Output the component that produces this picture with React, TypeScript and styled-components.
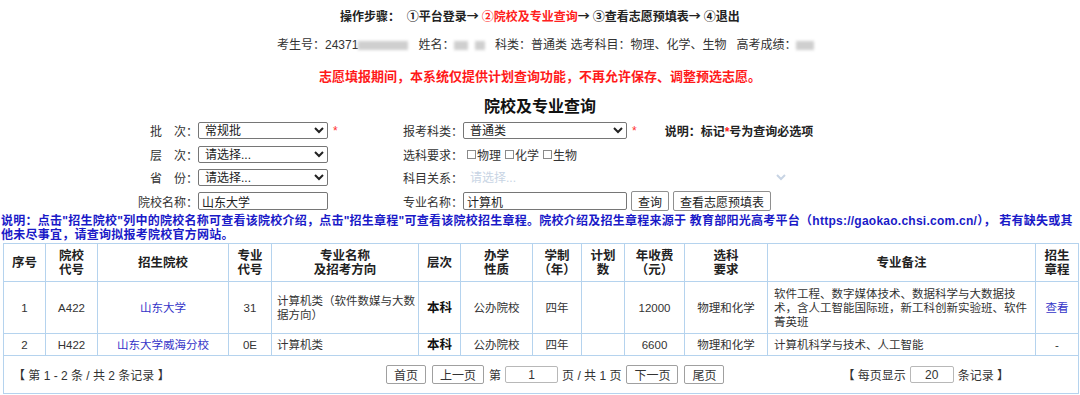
import React from 'react';
import styled, { createGlobalStyle } from 'styled-components';

const GlobalStyle = createGlobalStyle`
  html, body {
    margin: 0;
    padding: 0;
    background: #fff;
  }
  body {
    font-family: "Liberation Sans", "Noto Sans CJK SC", sans-serif;
    font-size: 12px;
    color: #333;
  }
`;

const Page = styled.div`
  width: 1080px;
  height: 395px;
  overflow: hidden;
  padding-top: 9px;
  box-sizing: border-box;
`;

const Steps = styled.div`
  text-align: center;
  font-weight: bold;
  font-size: 12px;
  line-height: 14px;
  color: #222;
`;

const Arrow = styled.span`
  font-family: "Noto Sans CJK SC", sans-serif;
  margin-right: 3px;
`;

const Red = styled.span`
  color: #ff2020;
`;

const InfoLine = styled.div`
  margin-top: 14px;
  padding-left: 277px;
  line-height: 14px;
  font-size: 12px;
  color: #333;
  white-space: nowrap;
`;

const Redact = styled.span<{ $w: number }>`
  display: inline-block;
  width: ${({ $w }) => $w}px;
  height: 9px;
  vertical-align: -1px;
  background: #cfcfcf;
  filter: blur(1.5px);
`;

const Notice = styled.div`
  margin-top: 18px;
  text-align: center;
  font-weight: bold;
  font-size: 13px;
  line-height: 14px;
  color: #ff1a1a;
`;

const Title = styled.h2`
  margin: 13px 0 0;
  text-align: center;
  font-size: 16px;
  line-height: 20px;
  font-weight: bold;
  color: #111;
`;

const Form = styled.div`
  margin-top: 2px;
  display: grid;
  grid-template-columns: 198px 205px 60px 1fr;
  grid-auto-rows: 23.5px;
  align-items: center;
`;

const Label = styled.div`
  text-align: right;
  white-space: nowrap;
  color: #333;
`;

const Field = styled.div`
  display: flex;
  align-items: center;
  white-space: nowrap;
`;

const Select = styled.select<{ $w: number }>`
  width: ${({ $w }) => $w}px;
  height: 17px;
  font-family: inherit;
  font-size: 12px;
  color: #222;
  padding: 0 2px;
  border: 1px solid #767676;
  border-radius: 2px;
  background: #fff;
  &:disabled {
    border-color: transparent;
    color: #c8d4e4;
    opacity: 1;
  }
`;

const Input = styled.input<{ $w: number }>`
  width: ${({ $w }) => $w}px;
  height: 18px;
  box-sizing: border-box;
  font-family: inherit;
  font-size: 12px;
  color: #222;
  padding: 0 3px;
  border: 1px solid #767676;
  border-radius: 2px;
`;

const Star = styled.span`
  color: #ff3030;
  margin-left: 5px;
`;

const Hint = styled.span`
  margin-left: 28px;
  font-weight: bold;
  color: #222;
`;

const Check = styled.input`
  appearance: none;
  width: 9px;
  height: 9px;
  margin: 0 1px 0 4px;
  border: 1px solid #8a8a8a;
  background: #fff;
`;

const Button = styled.button`
  height: 20px;
  margin-left: 4px;
  padding: 0 6px;
  font-family: inherit;
  font-size: 12px;
  color: #222;
  background: #fff;
  border: 1px solid #8f8f8f;
  border-radius: 2px;
`;

const Desc = styled.div`
  margin-top: 1px;
  padding-left: 1px;
  font-size: 12px;
  font-weight: bold;
  line-height: 14px;
  letter-spacing: 0.25px;
  color: #1a1ac8;
`;

const Table = styled.table`
  margin: 1px 0 0 3px;
  width: 1075px;
  table-layout: fixed;
  border-collapse: collapse;
  font-size: 11.5px;
  color: #333;
`;

const Th = styled.th`
  height: 37px;
  padding: 0;
  border: 1px solid #b5d3ee;
  font-weight: bold;
  font-size: 12.5px;
  line-height: 14px;
  color: #222;
  text-align: center;
`;

const Td = styled.td<{ $align?: string; $pad?: string; $bold?: boolean }>`
  padding: ${({ $pad }) => $pad || '0'};
  border: 1px solid #b5d3ee;
  line-height: 14px;
  text-align: ${({ $align }) => $align || 'center'};
  font-weight: ${({ $bold }) => ($bold ? 'bold' : 'normal')};
  font-size: ${({ $bold }) => ($bold ? '12.5px' : '11.5px')};
  color: ${({ $bold }) => ($bold ? '#111' : '#333')};
  word-break: break-all;
`;

const Row = styled.tr<{ $h: number }>`
  height: ${({ $h }) => $h}px;
`;

const SchoolLink = styled.a`
  color: #3434c8;
  text-decoration: none;
  cursor: pointer;
`;

const PagerCell = styled.td`
  height: 37px;
  padding: 0 0 0 9px;
  border: 1px solid #b5d3ee;
`;

const Pager = styled.div`
  display: flex;
  align-items: center;
  font-size: 12px;
  color: #333;
  white-space: nowrap;
`;

const PagerLeft = styled.div`
  width: 372px;
`;

const PagerMid = styled.div`
  display: flex;
  align-items: center;
  gap: 4px;
`;

const PageBtn = styled.button`
  height: 19px;
  padding: 0 7px;
  font-family: inherit;
  font-size: 12px;
  color: #333;
  background: #fff;
  border: 1px solid #a0a0a0;
  border-radius: 2px;
  margin: 0 1px;
`;

const PagerRight = styled.div`
  margin-left: 117px;
  display: flex;
  align-items: center;
  gap: 4px;
`;

const SmallInput = styled.input<{ $w: number }>`
  width: ${({ $w }) => $w}px;
  height: 17px;
  box-sizing: border-box;
  font-family: inherit;
  font-size: 12px;
  color: #333;
  text-align: center;
  border: 1px solid #b8b8b8;
  border-radius: 2px;
  padding: 0;
`;

const cols = [42, 52, 131, 43, 147, 42, 72, 49, 43, 60, 83, 268, 43];

const headers = [
  ['序号'],
  ['院校', '代号'],
  ['招生院校'],
  ['专业', '代号'],
  ['专业名称', '及招考方向'],
  ['层次'],
  ['办学', '性质'],
  ['学制', '（年）'],
  ['计划', '数'],
  ['年收费', '（元）'],
  ['选科', '要求'],
  ['专业备注'],
  ['招生', '章程'],
];

const rows = [
  {
    no: 1,
    code: 'A422',
    school: '山东大学',
    major: '31',
    name: '计算机类（软件数媒与大数据方向）',
    level: '本科',
    kind: '公办院校',
    years: '四年',
    plan: '',
    fee: '12000',
    req: '物理和化学',
    note: '软件工程、数字媒体技术、数据科学与大数据技术，含人工智能国际班，新工科创新实验班、软件菁英班',
    rule: '查看',
    h: 52,
  },
  {
    no: 2,
    code: 'H422',
    school: '山东大学威海分校',
    major: '0E',
    name: '计算机类',
    level: '本科',
    kind: '公办院校',
    years: '四年',
    plan: '',
    fee: '6600',
    req: '物理和化学',
    note: '计算机科学与技术、人工智能',
    rule: '',
    h: 22,
  },
];

export default function App() {
  return (
    <>
      <GlobalStyle />
      <Page>
        <Steps>
          操作步骤：&nbsp;&nbsp;①平台登录<Arrow>→</Arrow>
          <Red>②院校及专业查询</Red>
          <Arrow>→</Arrow>③查看志愿预填表<Arrow>→</Arrow>④退出
        </Steps>
        <InfoLine>
          考生号：24371<Redact $w={50} />&nbsp;&nbsp;&nbsp;姓名：<Redact $w={14} />&nbsp;&nbsp;
          <Redact $w={10} />&nbsp;&nbsp;&nbsp;科类：普通类 选考科目：物理、化学、生物&nbsp;&nbsp;&nbsp;高考成绩：
          <Redact $w={18} />
        </InfoLine>
        <Notice>志愿填报期间，本系统仅提供计划查询功能，不再允许保存、调整预选志愿。</Notice>
        <Title>院校及专业查询</Title>
        <Form>
          <Label>批　次：</Label>
          <Field>
            <Select $w={130} defaultValue="常规批">
              <option>常规批</option>
            </Select>
            <Star>*</Star>
          </Field>
          <Label>报考科类：</Label>
          <Field>
            <Select $w={164} defaultValue="普通类">
              <option>普通类</option>
            </Select>
            <Star>*</Star>
            <Hint>
              说明：标记<Red>*</Red>号为查询必选项
            </Hint>
          </Field>

          <Label>层　次：</Label>
          <Field>
            <Select $w={130}>
              <option>请选择...</option>
            </Select>
          </Field>
          <Label>选科要求：</Label>
          <Field>
            <Check type="checkbox" />物理
            <Check type="checkbox" />化学
            <Check type="checkbox" />生物
          </Field>

          <Label>省　份：</Label>
          <Field>
            <Select $w={130}>
              <option>请选择...</option>
            </Select>
          </Field>
          <Label>科目关系：</Label>
          <Field>
            <Select $w={327} disabled>
              <option>请选择...</option>
            </Select>
          </Field>

          <Label>院校名称：</Label>
          <Field>
            <Input $w={130} defaultValue="山东大学" />
          </Field>
          <Label>专业名称：</Label>
          <Field>
            <Input $w={164} defaultValue="计算机" />
            <Button>查询</Button>
            <Button>查看志愿预填表</Button>
          </Field>
        </Form>
        <Desc>
          说明：点击"招生院校"列中的院校名称可查看该院校介绍，点击"招生章程"可查看该院校招生章程。院校介绍及招生章程来源于
          教育部阳光高考平台（https://gaokao.chsi.com.cn/），
          若有缺失或其他未尽事宜，请查询拟报考院校官方网站。
        </Desc>
        <Table>
          <colgroup>
            {cols.map((w, i) => (
              <col key={i} style={{ width: w }} />
            ))}
          </colgroup>
          <thead>
            <tr>
              {headers.map((h, i) => (
                <Th key={i}>
                  {h.map((line, j) => (
                    <React.Fragment key={j}>
                      {j > 0 && <br />}
                      {line}
                    </React.Fragment>
                  ))}
                </Th>
              ))}
            </tr>
          </thead>
          <tbody>
            {rows.map((r) => (
              <Row key={r.no} $h={r.h}>
                <Td>{r.no}</Td>
                <Td>{r.code}</Td>
                <Td>
                  <SchoolLink>{r.school}</SchoolLink>
                </Td>
                <Td>{r.major}</Td>
                <Td $align="left" $pad="0 2px 0 5px">
                  {r.name}
                </Td>
                <Td $bold>{r.level}</Td>
                <Td>{r.kind}</Td>
                <Td>{r.years}</Td>
                <Td>{r.plan}</Td>
                <Td>{r.fee}</Td>
                <Td>{r.req}</Td>
                <Td $align="left" $pad="0 4px 0 6px">
                  {r.note}
                </Td>
                <Td>{r.rule ? <SchoolLink>{r.rule}</SchoolLink> : '-'}</Td>
              </Row>
            ))}
            <tr>
              <PagerCell colSpan={13}>
                <Pager>
                  <PagerLeft>【 第 1 - 2 条 / 共 2 条记录 】</PagerLeft>
                  <PagerMid>
                    <PageBtn>首页</PageBtn>
                    <PageBtn>上一页</PageBtn>
                    <span>第</span>
                    <SmallInput $w={53} defaultValue="1" />
                    <span>页 / 共 1 页</span>
                    <PageBtn>下一页</PageBtn>
                    <PageBtn>尾页</PageBtn>
                  </PagerMid>
                  <PagerRight>
                    <span>【 每页显示</span>
                    <SmallInput $w={44} defaultValue="20" />
                    <span>条记录 】</span>
                  </PagerRight>
                </Pager>
              </PagerCell>
            </tr>
          </tbody>
        </Table>
      </Page>
    </>
  );
}
